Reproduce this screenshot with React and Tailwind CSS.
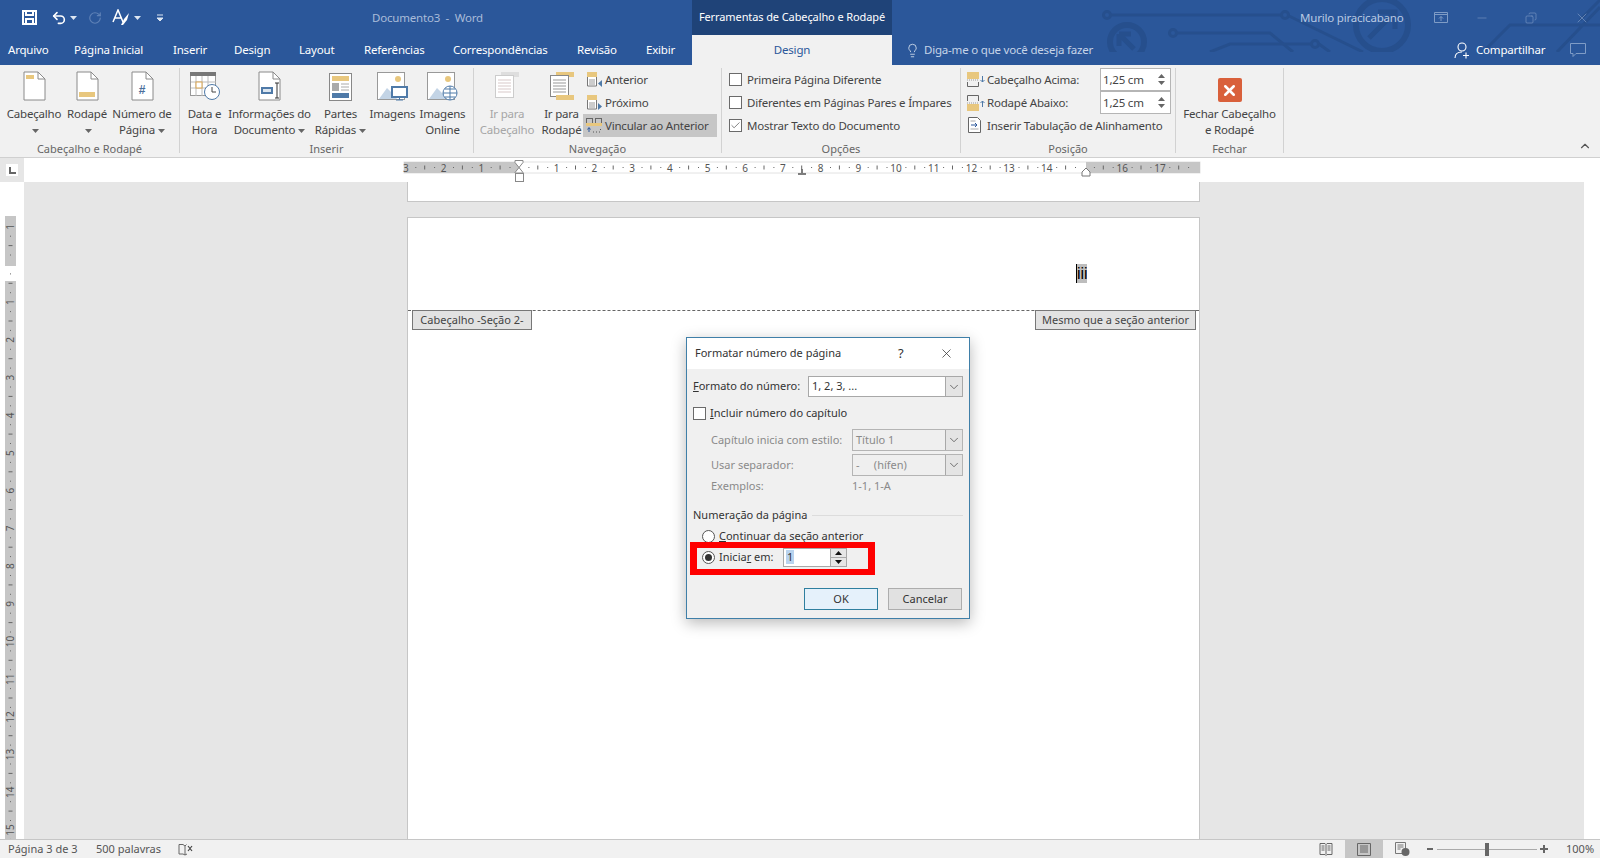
import { Undo2, RotateCw, X, Lightbulb, Minus, Copy, ChevronDown, ChevronUp, Check } from "lucide-react";

const tabs = [
  ["Arquivo", "w-[66px] pl-[8px]"],
  ["Página Inicial", "w-[99px] pl-[8px]"],
  ["Inserir", "w-[61px] pl-[8px]"],
  ["Design", "w-[65px] pl-[8px]"],
  ["Layout", "w-[65px] pl-[8px]"],
  ["Referências", "w-[89px] pl-[8px]"],
  ["Correspondências", "w-[124px] pl-[8px]"],
  ["Revisão", "w-[69px] pl-[8px]"],
  ["Exibir", "w-[54px] pl-[8px]"],
];

function Caret({ color = "#666" }) {
  return (
    <svg width="7" height="4" viewBox="0 0 7 4" className="inline-block ml-[3px] align-middle">
      <path d="M0 0h7L3.5 4z" fill={color} />
    </svg>
  );
}

// folded page used by most ribbon icons
function Page({ children, w = 21, h = 28, stroke = "#8a8a8a" }) {
  return (
    <svg width={w + 2} height={h + 2} viewBox={`0 0 ${w + 2} ${h + 2}`}>
      <path d={`M1 1h${w - 7}l7 7v${h - 7}h-${w}z`} fill="#fff" stroke={stroke} />
      <path d={`M${w - 6} 1v7h7`} fill="none" stroke={stroke} />
      {children}
    </svg>
  );
}

function LargeButton({ icon, lines, width, caret, disabled }) {
  return (
    <div className={width + " flex flex-col items-center shrink-0"}>
      <div className="h-[34px] flex items-end justify-center pb-[1px]">{icon}</div>
      <div className={"mt-[4px] text-center leading-[16px] whitespace-nowrap " + (disabled ? "text-[#a6a6a6]" : "text-[#444]")}>
        <div>{lines[0]}</div>
        <div className="h-[16px]">{lines[1]}{caret && <Caret />}</div>
      </div>
    </div>
  );
}

function Group({ label, width, children }) {
  return (
    <div className={width + " h-[85px] shrink-0 border-r border-[#d2d2d2]"}>
      <div className="h-[73px] flex">{children}</div>
      <div className="h-[12px] leading-[16px] text-center text-[11px] tracking-normal text-[#666] whitespace-nowrap">{label}</div>
    </div>
  );
}

function Check13({ checked }) {
  return (
    <div className="w-[13px] h-[13px] border border-[#6a6a6a] bg-white flex items-center justify-center shrink-0">
      {checked && <Check size={11} strokeWidth={1.6} color="#555" />}
    </div>
  );
}

function SmallIcon({ arrow }) {
  return (
    <svg width="17" height="17" viewBox="0 0 17 17">
      <rect x="1" y="1" width="10" height="5" fill="#e8c77e" />
      <path d="M1.5 6v9h9V6" fill="#fff" stroke="#777" />
      <path d="M3 9h6M3 11h6M3 13h6" stroke="#999" />
      <path d={arrow === "left" ? "M16 9v7l-4-3.5z" : "M12 9v7l4-3.5z"} fill="#4f7aa8" />
    </svg>
  );
}

function SpinField({ value }) {
  return (
    <div className="w-[71px] h-[23px] bg-white border border-[#b5b5b5] flex items-center pl-[2px] pr-[5px]">
      <span className="flex-1">{value}</span>
      <div className="flex flex-col items-center gap-[3px]">
        <svg width="7" height="4"><path d="M0 4h7L3.500 0z" fill="#666" /></svg>
        <svg width="7" height="4"><path d="M0 0h7L3.500 4z" fill="#666" /></svg>
      </div>
    </div>
  );
}

function Ribbon() {
  return (
    <div className="h-[93px] bg-[#f1f1f1] border-b border-[#d0d0d0] pt-[3px] flex text-[11.5px] tracking-[-0.2px] text-[#444] shrink-0">
      <Group label="Cabeçalho e Rodapé" width="w-[180px]">
        <div className="w-[5px]" />
        <LargeButton width="w-[58px]" lines={["Cabeçalho", ""]} caret
          icon={<Page><rect x="3" y="4" width="8" height="4" fill="#e8c77e" /></Page>} />
        <LargeButton width="w-[48px]" lines={["Rodapé", ""]} caret
          icon={<Page><rect x="3" y="21" width="16" height="5" fill="#e8c77e" /></Page>} />
        <LargeButton width="w-[62px]" lines={["Número de", "Página"]} caret
          icon={<Page><text x="11" y="23" textAnchor="middle" fontSize="12" fontWeight="700" fill="#4a6f9c" fontFamily="Liberation Sans, sans-serif">#</text></Page>} />
      </Group>

      <Group label="Inserir" width="w-[294px]">
        <div className="w-[2px]" />
        <LargeButton width="w-[45px]" lines={["Data e", "Hora"]}
          icon={
            <svg width="30" height="29" viewBox="0 0 30 29">
              <rect x="0.500" y="0.500" width="25" height="23" fill="#fff" stroke="#999" />
              <rect x="0" y="0" width="26" height="4" fill="#777" />
              <path d="M6 4v20M12 4v20M18 4v20M1 10h25M1 16h25" stroke="#bbb" />
              <rect x="6" y="10" width="6" height="6" fill="#fff" stroke="#d9a44e" />
              <circle cx="22" cy="20" r="7.500" fill="#fff" stroke="#4f7aa8" />
              <path d="M22 15v5h4" fill="none" stroke="#444" />
            </svg>
          } />
        <LargeButton width="w-[85px]" lines={["Informações do", "Documento"]} caret
          icon={
            <Page>
              <rect x="3" y="16" width="12" height="7" fill="#4f7aa8" />
              <rect x="5" y="18" width="8" height="3" fill="#dce6f0" />
              <path d="M17 12h4M19 12v15M17 27h4" stroke="#333" fill="none" />
            </Page>
          } />
        <LargeButton width="w-[57px]" lines={["Partes", "Rápidas"]} caret
          icon={
            <svg width="23" height="28" viewBox="0 0 23 28">
              <rect x="0.500" y="0.500" width="22" height="27" fill="#fff" stroke="#888" />
              <rect x="3" y="3" width="17" height="5" fill="#e8c77e" />
              <rect x="3" y="10" width="7" height="8" fill="#aaa" />
              <path d="M12 11h8M12 14h8M12 17h8" stroke="#aaa" />
              <rect x="3" y="20" width="17" height="5" fill="#4f7aa8" />
            </svg>
          } />
        <LargeButton width="w-[47px]" lines={["Imagens", ""]}
          icon={
            <svg width="31" height="29" viewBox="0 0 31 29">
              <rect x="0.500" y="0.500" width="27" height="27" fill="#fff" stroke="#999" />
              <circle cx="21" cy="7" r="3" fill="#e8c77e" />
              <path d="M2 27l8-11 7 7 3 4z" fill="#c3d4e6" />
              <rect x="15" y="15" width="15" height="10" fill="#fff" stroke="#4f7aa8" strokeWidth="2" />
              <path d="M22.500 25v3M19 28h7" stroke="#4f7aa8" />
            </svg>
          } />
        <LargeButton width="w-[53px]" lines={["Imagens", "Online"]}
          icon={
            <svg width="31" height="29" viewBox="0 0 31 29">
              <rect x="0.500" y="0.500" width="27" height="27" fill="#fff" stroke="#999" />
              <circle cx="21" cy="7" r="3" fill="#e8c77e" />
              <path d="M2 27l8-11 7 7 3 4z" fill="#c3d4e6" />
              <circle cx="23" cy="21" r="7" fill="#fff" stroke="#4f7aa8" />
              <path d="M16 21h14M23 14v14M18 17h10M18 25h10" stroke="#4f7aa8" fill="none" />
            </svg>
          } />
      </Group>

      <Group label="Navegação" width="w-[248px]">
        <LargeButton width="w-[66px]" lines={["Ir para", "Cabeçalho"]} disabled
          icon={
            <svg width="24" height="29" viewBox="0 0 24 29">
              <rect x="6" y="0" width="18" height="5" fill="#dedede" />
              <rect x="0.500" y="3.500" width="18" height="22" fill="#fff" stroke="#ccc" />
              <path d="M3 8h13M3 11h13M3 14h13M3 17h13M3 20h13" stroke="#d8c9c9" />
            </svg>
          } />
        <LargeButton width="w-[43px]" lines={["Ir para", "Rodapé"]}
          icon={
            <svg width="24" height="29" viewBox="0 0 24 29">
              <rect x="6" y="0" width="18" height="5" fill="#e8c77e" />
              <rect x="0.500" y="3.500" width="18" height="21" fill="#fff" stroke="#888" />
              <path d="M3 8h13M3 11h13M3 14h13M3 17h13M3 20h13" stroke="#999" />
              <rect x="6" y="23" width="18" height="5" fill="#e8c77e" />
            </svg>
          } />
        <div className="w-[134px] flex flex-col">
          <div className="h-[23px] flex items-center gap-[2px] pl-[3px]"><SmallIcon arrow="left" /><span>Anterior</span></div>
          <div className="h-[23px] flex items-center gap-[2px] pl-[3px]"><SmallIcon arrow="right" /><span>Próximo</span></div>
          <div className="h-[23px] flex items-center gap-[2px] pl-[3px] bg-[#c6c6c6]">
            <svg width="17" height="17" viewBox="0 0 17 17">
              <rect x="0.500" y="1.500" width="6" height="5" fill="none" stroke="#666" />
              <rect x="9.500" y="1.500" width="6" height="5" fill="none" stroke="#666" />
              <rect x="0" y="6" width="16" height="3" fill="#e8c77e" />
              <path d="M3 15v-4M1.500 12.500L3 10.500l1.500 2" stroke="#2b579a" fill="none" />
              <path d="M7 15h1M10 15h1M13 15h1M14.500 12v1" stroke="#555" />
            </svg>
            <span className="whitespace-nowrap">Vincular ao Anterior</span>
          </div>
        </div>
      </Group>

      <Group label="Opções" width="w-[239px]">
        <div className="pl-[7px] flex flex-col whitespace-nowrap">
          <div className="h-[23px] flex items-center gap-[5px]"><Check13 /><span>Primeira Página Diferente</span></div>
          <div className="h-[23px] flex items-center gap-[5px]"><Check13 /><span>Diferentes em Páginas Pares e Ímpares</span></div>
          <div className="h-[23px] flex items-center gap-[5px]"><Check13 checked /><span>Mostrar Texto do Documento</span></div>
        </div>
      </Group>

      <Group label="Posição" width="w-[215px]">
        <div className="pl-[6px] flex flex-col w-full">
          <div className="h-[23px] flex items-center">
            <svg width="19" height="17" viewBox="0 0 19 17" className="shrink-0">
              <rect x="0" y="1" width="12" height="7" fill="#e8c77e" />
              <path d="M0 9h12" stroke="#999" strokeDasharray="1 1" />
              <path d="M0.500 11v4.500h11V11" fill="none" stroke="#666" />
              <path d="M15.500 5v6M13.500 9l2 2 2-2" stroke="#4f7aa8" fill="none" />
            </svg>
            <span className="w-[114px] pl-[1px]">Cabeçalho Acima:</span>
            <SpinField value="1,25 cm" />
          </div>
          <div className="h-[23px] flex items-center">
            <svg width="19" height="17" viewBox="0 0 19 17" className="shrink-0">
              <path d="M0.500 7V1.500h11V7" fill="none" stroke="#666" />
              <path d="M0 9h12" stroke="#999" strokeDasharray="1 1" />
              <rect x="0" y="10" width="12" height="7" fill="#e8c77e" />
              <path d="M15.500 13V7M13.500 9l2-2 2 2" stroke="#4f7aa8" fill="none" />
            </svg>
            <span className="w-[114px] pl-[1px]">Rodapé Abaixo:</span>
            <SpinField value="1,25 cm" />
          </div>
          <div className="h-[23px] flex items-center">
            <svg width="19" height="17" viewBox="0 0 19 17" className="shrink-0">
              <path d="M1.500 0.500h9l3 3v12h-12z" fill="#fff" stroke="#666" />
              <path d="M4 8h6M8 6l2 2-2 2" stroke="#2b579a" fill="none" />
              <path d="M3.500 4h5M3.500 12h8" stroke="#aaa" />
            </svg>
            <span className="pl-[1px] whitespace-nowrap">Inserir Tabulação de Alinhamento</span>
          </div>
        </div>
      </Group>

      <Group label="Fechar" width="w-[108px]">
        <div className="w-full flex flex-col items-center">
          <div className="h-[34px] flex items-end">
            <div className="w-[24px] h-[24px] bg-[#d9603b] rounded-[2px] flex items-center justify-center">
              <X size={17} strokeWidth={3.6} color="#fff" />
            </div>
          </div>
          <div className="mt-[4px] text-center leading-[16px] whitespace-nowrap">
            <div>Fechar Cabeçalho</div>
            <div>e Rodapé</div>
          </div>
        </div>
      </Group>

      <div className="flex-1 flex justify-end items-end pr-[8px] pb-[4px]">
        <ChevronUp size={14} strokeWidth={2} color="#555" />
      </div>
    </div>
  );
}

const CM = 37.7;
const cms = [-3, -2, -1, 0, 1, 2, 3, 4, 5, 6, 7, 8, 9, 10, 11, 12, 13, 14, 15, 16, 17];

function HRuler() {
  const zero = 119; // 519 on the page, svg starts at 400
  return (
    <svg width="804" height="25" viewBox="0 0 804 25" className="ml-[376px] -mt-[1px]">
      <rect x="4" y="5" width="796" height="11" fill="#fff" stroke="#e2e2e2" />
      <rect x="4" y="5" width="116" height="11" fill="#c6c6c6" />
      <rect x="686" y="5" width="114" height="11" fill="#c6c6c6" />
      {cms.map((c) => {
        const x = zero + c * CM;
        return (
          <g key={c}>
            {c !== 0 && c !== 15 && (
              <text x={x} y="14.500" textAnchor="middle" fontSize="10" fill="#555" fontFamily="Noto Sans, sans-serif">{Math.abs(c)}</text>
            )}
            <path d={`M${x + 9.4} 10.500h1M${x + 18.800} 8.500v4M${x + 28.200} 10.500h1`} stroke="#666" />
          </g>
        );
      })}
      <path d="M115 3.500h8v2l-4 5-4-5zM119 10.500l4 5v.5h-8v-.5z" fill="#fff" stroke="#888" />
      <rect x="115.500" y="16.500" width="8" height="8" fill="#fff" stroke="#888" />
      <path d="M402 12v4M398 17h8" stroke="#555" strokeWidth="1.500" fill="none" />
      <path d="M682 15l4-4 4 4v4h-8z" fill="#fff" stroke="#777" />
    </svg>
  );
}

function VRuler() {
  const zero = 82.5; // 264.5 on the page, svg starts at 182
  const rows = Array.from({ length: 17 }, (_, i) => i - 1);
  return (
    <svg width="24" height="657" viewBox="0 0 24 657" className="shrink-0 bg-white">
      <rect x="5" y="34" width="11" height="623" fill="#c6c6c6" />
      <rect x="5" y="84" width="11" height="15" fill="#fff" />
      {rows.map((c) => {
        const y = zero + c * CM;
        return (
          <g key={c}>
            {c !== 0 && (
              <text x="10.500" y={y} textAnchor="middle" fontSize="10" fill="#555" fontFamily="Noto Sans, sans-serif" transform={`rotate(-90 10.500 ${y}) translate(0 3.500)`}>{Math.abs(c)}</text>
            )}
            <path d={`M10 ${y + 9.4}h1M8.500 ${y + 18.800}h4M10 ${y + 28.200}h1`} stroke="#666" strokeWidth="1" />
          </g>
        );
      })}
    </svg>
  );
}

function Arrow() {
  return (
    <div className="w-[17px] self-stretch border-l border-[#a8a8a8] bg-[#e4e4e4] flex items-center justify-center">
      <ChevronDown size={14} strokeWidth={1.4} color="#555" />
    </div>
  );
}

function Dialog() {
  return (
    <div className="absolute left-[686px] top-[337px] w-[284px] h-[282px] bg-[#f0f0f0] border border-[#3f7fa8] shadow-[0_4px_14px_rgba(0,0,0,0.28)] text-[11px] text-[#333]">
      <div className="h-[31px] bg-white flex items-center pl-[8px]">
        <span className="w-[203px] whitespace-nowrap">Formatar número de página</span>
        <span className="w-[41px] text-[13px]">?</span>
        <X size={15} strokeWidth={1.2} color="#333" />
      </div>
      <div className="px-[6px]">
        <div className="mt-[7px] h-[21px] flex items-center">
          <span className="w-[115px] whitespace-nowrap"><u>F</u>ormato do número:</span>
          <div className="w-[155px] h-[21px] bg-white border border-[#a8a8a8] flex items-center">
            <span className="flex-1 pl-[3px]">1, 2, 3, ...</span>
            <Arrow />
          </div>
        </div>
        <div className="mt-[10px] h-[13px] flex items-center gap-[4px]">
          <Check13 />
          <span><u>I</u>ncluir número do capítulo</span>
        </div>
        <div className="mt-[9px] h-[22px] flex items-center text-[#8a8a8a]">
          <span className="w-[159px] pl-[18px] whitespace-nowrap">Capítulo inicia com estilo:</span>
          <div className="w-[111px] h-[22px] bg-[#efefef] border border-[#b4b4b4] flex items-center">
            <span className="flex-1 pl-[3px]">Título 1</span>
            <Arrow />
          </div>
        </div>
        <div className="mt-[3px] h-[22px] flex items-center text-[#8a8a8a]">
          <span className="w-[159px] pl-[18px]">Usar separador:</span>
          <div className="w-[111px] h-[22px] bg-[#efefef] border border-[#b4b4b4] flex items-center">
            <span className="flex-1 pl-[3px] whitespace-pre">-     (hífen)</span>
            <Arrow />
          </div>
        </div>
        <div className="mt-[3px] h-[14px] flex items-center text-[#8a8a8a]">
          <span className="w-[159px] pl-[18px]">Exemplos:</span>
          <span>1-1, 1-A</span>
        </div>
        <div className="mt-[15px] h-[14px] flex items-center gap-[5px]">
          <span className="whitespace-nowrap">Numeração da página</span>
          <div className="flex-1 h-px bg-[#dcdcdc]" />
        </div>
        <div className="mt-[7px] h-[14px] flex items-center gap-[4px] pl-[9px]">
          <div className="w-[13px] h-[13px] rounded-full border border-[#555] bg-white" />
          <span><u>C</u>ontinuar da seção anterior</span>
        </div>
        <div className="mt-[7px] h-[14px] flex items-center pl-[9px]">
          <div className="w-[13px] h-[13px] rounded-full border border-[#555] bg-white flex items-center justify-center mr-[4px]">
            <div className="w-[7px] h-[7px] rounded-full bg-[#333]" />
          </div>
          <span className="w-[64px]">Inicia<u>r</u> em:</span>
          <div className="w-[64px] h-[19px] bg-white border border-[#a8a8a8] flex items-center">
            <span className="ml-[2px] bg-[#b9d3ee] px-[1px] leading-[14px]">1</span>
            <div className="ml-auto w-[16px] h-full border-l border-[#a8a8a8] flex flex-col">
              <div className="flex-1 bg-[#e6e6e6] border-b border-[#a8a8a8] flex items-center justify-center">
                <svg width="7" height="4"><path d="M0 4h7L3.500 0z" fill="#111" /></svg>
              </div>
              <div className="flex-1 bg-[#e6e6e6] flex items-center justify-center">
                <svg width="7" height="4"><path d="M0 0h7L3.500 4z" fill="#111" /></svg>
              </div>
            </div>
          </div>
        </div>
        <div className="mt-[24px] flex justify-end gap-[10px] pr-[1px]">
          <div className="w-[74px] h-[22px] bg-[#e5f1fb] border border-[#2f7f9f] flex items-center justify-center">OK</div>
          <div className="w-[74px] h-[22px] bg-[#e1e1e1] border border-[#adadad] flex items-center justify-center">Cancelar</div>
        </div>
      </div>
      {/* red highlight drawn over the screenshot */}
      <div className="absolute left-[3px] top-[204px] w-[185px] h-[33px] border-x-[7px] border-y-[6px] border-[#ff0000] pointer-events-none" />
    </div>
  );
}

function StatusBar() {
  return (
    <div className="h-[19px] shrink-0 bg-[#f1f1f1] border-t border-[#c6c6c6] flex items-center text-[11px] text-[#555]">
      <span className="ml-[8px] w-[88px]">Página 3 de 3</span>
      <span className="w-[82px]">500 palavras</span>
      <svg width="15" height="13" viewBox="0 0 15 13">
        <path d="M1 1.500h4l2 1.500v9l-2-1H1zM7 3l1.500-1.500M7 12l2-1" fill="none" stroke="#666" />
        <path d="M10 3l4 5M14 3l-4 5" stroke="#444" strokeWidth="1.200" />
      </svg>
      <div className="ml-auto flex items-center h-full">
        <svg width="14" height="13" viewBox="0 0 14 13">
          <path d="M1 .500h5l1 1 1-1h5v11H8l-1 1-1-1H1zM7 1.500v10M2.500 3h3M2.500 5h3M2.500 7h3M8.500 3h3M8.500 5h3M8.500 7h3" fill="none" stroke="#666" />
        </svg>
        <div className="ml-[12px] w-[38px] h-full bg-[#c6c6c6] flex items-center justify-center">
          <svg width="14" height="13" viewBox="0 0 14 13">
            <path d="M.500.500h13v12H.500zM3 3h8M3 5h8M3 7h8M3 9h8" fill="none" stroke="#666" />
          </svg>
        </div>
        <svg width="15" height="14" viewBox="0 0 15 14" className="ml-[12px]">
          <path d="M.500.500h10v11H.500zM2.500 3h6M2.500 5h6M2.500 7h3" fill="none" stroke="#777" />
          <circle cx="10.500" cy="10" r="4" fill="#666" />
        </svg>
        <div className="ml-[17px] w-[6px] h-[2px] bg-[#666]" />
        <div className="ml-[4px] w-[100px] h-px bg-[#aaa] relative">
          <div className="absolute left-[48px] top-[-6px] w-[4px] h-[13px] bg-[#666]" />
        </div>
        <div className="ml-[3px] relative w-[8px] h-[8px]">
          <div className="absolute top-[3px] left-0 w-[8px] h-[2px] bg-[#666]" />
          <div className="absolute left-[3px] top-0 w-[2px] h-[8px] bg-[#666]" />
        </div>
        <span className="ml-[18px] mr-[8px] w-[26px]">100%</span>
      </div>
    </div>
  );
}

export default function App() {
  return (
    <div className="relative w-[1600px] h-[858px] overflow-hidden bg-white flex flex-col text-[11.5px]" style={{ fontFamily: '"Noto Sans", "Open Sans", sans-serif' }}>
      <div className="relative h-[65px] bg-[#2b579a] shrink-0 tracking-[-0.2px]">
        {/* circuit pattern behind the title bar, clipped at y=52 */}
        <svg width="520" height="52" viewBox="1080 0 520 52" className="absolute right-0 top-0" fill="none" stroke="#264f8d" strokeWidth="3">
          <circle cx="1107" cy="15" r="3.500" />
          <path d="M1111 15h170" />
          <circle cx="1285" cy="15" r="3.500" />
          <path d="M1289 16l74 36" />
          <circle cx="1173" cy="33" r="3.500" />
          <path d="M1177 33h93l23 19" />
          <circle cx="1315" cy="44" r="3.500" />
          <path d="M1311 44h-81l-20 8M1319 44l11 8" />
          <circle cx="1127" cy="42" r="17" strokeWidth="6" />
          <path d="M1119 34l15 15M1119 34h12M1119 34v12" strokeWidth="5" />
          <circle cx="1382" cy="25" r="26" strokeWidth="6" />
          <path d="M1369 38l26-26M1378 12h17v17" strokeWidth="5" />
          <path d="M1483 52l27-27h90M1557 52l43-45M1580 20l20-20" />
        </svg>

        <div className="relative h-[35px] flex items-center">
          <div className="w-[372px] h-full flex items-center text-white">
            <svg width="15" height="15" viewBox="0 0 15 15" className="ml-[22px]" fill="none" stroke="#fff" strokeWidth="2">
              <path d="M1 1h13v13H1zM4 1v4h7V1M4 14V9h7v5" />
            </svg>
            <Undo2 size={16} strokeWidth={2.4} className="ml-[14px]" />
            <Caret color="#dce6f2" />
            <RotateCw size={14} strokeWidth={2} color="#5f82b7" className="ml-[11px]" />
            <svg width="19" height="18" viewBox="0 0 19 18" className="ml-[10px]" fill="none" stroke="#fff" strokeWidth="1.500">
              <path d="M1 13L6 1l5 12M3 9h6" />
              <path d="M9 16l3-6 5-6-2 7-4 5z" fill="#fff" stroke="none" />
            </svg>
            <Caret color="#dce6f2" />
            <svg width="7" height="8" viewBox="0 0 7 8" className="ml-[16px]">
              <path d="M0 1h6M0 4h6L3 7z" stroke="#dce6f2" fill="#dce6f2" strokeWidth="1" />
            </svg>
          </div>
          <div className="w-[320px] text-[#a9bcd9] whitespace-pre">Documento3  -  Word</div>
          <div className="w-[200px] h-full bg-[#1f4378] text-white flex items-center justify-center whitespace-nowrap text-[11px] tracking-[-0.1px]">Ferramentas de Cabeçalho e Rodapé</div>
          <span className="ml-[408px] w-[134px] text-[#b9c9e2] whitespace-nowrap">Murilo piracicabano</span>
          <svg width="14" height="11" viewBox="0 0 14 11" fill="none" stroke="#7f9cc6">
            <path d="M.500.500h13v10H.500zM.500 2.500h13M7 9V4.500M5 6.500l2-2 2 2" />
          </svg>
          <Minus size={14} strokeWidth={1} color="#7f9cc6" className="ml-[27px]" />
          <Copy size={12} strokeWidth={1.2} color="#7f9cc6" className="ml-[36px] -scale-x-100" />
          <X size={16} strokeWidth={1} color="#7f9cc6" className="ml-[37px]" />
        </div>

        <div className="relative h-[30px] flex items-center text-white">
          {tabs.map(([name, cls]) => (
            <div key={name} className={cls + " whitespace-nowrap"}>{name}</div>
          ))}
          <div className="w-[200px] h-full bg-[#f1f1f1] text-[#2b579a] flex items-center justify-center">Design</div>
          <Lightbulb size={15} strokeWidth={1.3} color="#dce6f2" className="ml-[13px]" />
          <span className="ml-[4px] w-[530px] text-[#c6d4e8] whitespace-nowrap">Diga-me o que você deseja fazer</span>
          <svg width="16" height="17" viewBox="0 0 16 17" fill="none" stroke="#fff" strokeWidth="1.100">
            <circle cx="8" cy="5" r="4" />
            <path d="M1 16c0-4 3-6 7-6M9 13.500h6M12 10.500v6" />
          </svg>
          <span className="ml-[6px] w-[94px] whitespace-nowrap">Compartilhar</span>
          <svg width="16" height="15" viewBox="0 0 16 15" fill="none" stroke="#7f9cc6">
            <path d="M.500.500h15v10H6l-3 3v-3H.500z" />
          </svg>
        </div>
      </div>

      <Ribbon />

      <div className="h-[24px] shrink-0 flex">
        <div className="w-[24px] h-full bg-[#e6e6e6] flex items-center justify-center">
          <div className="w-[12px] h-[12px] bg-white flex items-center justify-center">
            <svg width="7" height="7"><path d="M1 0v6h6" fill="none" stroke="#666" strokeWidth="2" /></svg>
          </div>
        </div>
        <HRuler />
      </div>

      <div className="flex-1 min-h-0 flex">
        <VRuler />
        <div className="flex-1 bg-[#e6e6e6] flex flex-col pl-[383px]">
          <div className="w-[793px] h-[20px] bg-white border-x border-b border-[#c6c6c6]" />
          <div className="mt-[15px] w-[793px] flex-1 bg-white border-x border-t border-[#c6c6c6]">
            <div className="h-[92px] flex items-start justify-end pr-[112px] pt-[46px]">
              <span className="w-[11px] bg-[#bdbdbd] border-l border-black text-black text-[16px] leading-[19px] text-center overflow-hidden" style={{ fontFamily: '"Liberation Sans", sans-serif' }}>iii</span>
            </div>
            <div className="border-t border-dashed border-[#666] flex justify-between px-[4px] text-[11px] text-[#444]">
              <div className="-mt-px h-[20px] w-[120px] bg-[#e2e2e2] border border-[#777] flex items-center justify-center whitespace-nowrap">Cabeçalho -Seção 2-</div>
              <div className="-mt-px mr-[-1px] h-[20px] w-[161px] bg-[#e2e2e2] border border-[#777] flex items-center justify-center whitespace-nowrap">Mesmo que a seção anterior</div>
            </div>
          </div>
        </div>
        <div className="w-[16px] bg-white" />
      </div>

      <StatusBar />
      <Dialog />
    </div>
  );
}
